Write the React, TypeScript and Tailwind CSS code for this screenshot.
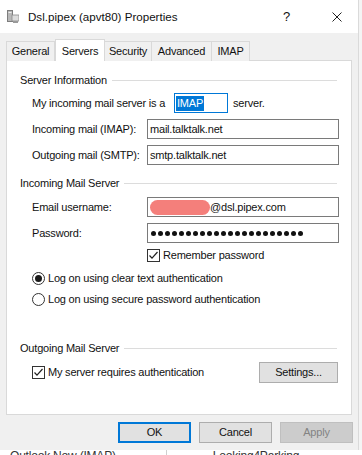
import React from "react";

const tabs = [
  { name: "General", w: "w-[49px]" },
  { name: "Servers", w: "w-[50px]", active: true },
  { name: "Security", w: "w-[48px]" },
  { name: "Advanced", w: "w-[61px]" },
  { name: "IMAP", w: "w-[39px]" },
];

function GroupHeader({ title }: { title: string }) {
  return (
    <div className="flex h-[14px] items-center">
      <span>{title}</span>
      <div className="ml-[5px] mr-[2px] h-px flex-1 bg-[#dcdcdc]" />
    </div>
  );
}

function Field({ label, children }: { label: string; children: React.ReactNode }) {
  return (
    <div className="flex h-[20px] items-center pl-[12px]">
      <span className="w-[115px] shrink-0">{label}</span>
      <div className="flex h-full flex-1 items-center border border-[#7a7a7a] bg-white px-[2px]">{children}</div>
    </div>
  );
}

function Check() {
  return (
    <span className="flex h-[13px] w-[13px] shrink-0 items-center justify-center border border-[#333] bg-white">
      <svg width="11" height="11" viewBox="0 0 11 11">
        <polyline points="1.5,5.5 4,8.2 9.5,2" fill="none" stroke="#222" strokeWidth="1.2" />
      </svg>
    </span>
  );
}

function Radio({ on }: { on?: boolean }) {
  return (
    <span className="flex h-[13px] w-[13px] shrink-0 items-center justify-center rounded-full border border-[#333] bg-white">
      {on && <span className="h-[7px] w-[7px] rounded-full bg-[#1a1a1a]" />}
    </span>
  );
}

export default function App() {
  return (
    <div className="flex h-[455px] w-[362px] flex-col overflow-hidden bg-white font-['Liberation_Sans',Arial,sans-serif] text-[11px] tracking-[-0.2px] text-[#111]">
      <div className="flex h-[450px] shrink-0">
        <div className="flex w-[358px] flex-col bg-[#f0f0f0]">
          {/* title bar */}
          <div className="flex h-[33px] shrink-0 items-center bg-white pl-[7px]">
            <svg width="12" height="13" viewBox="0 0 12 13">
              <rect x="0.5" y="0.5" width="5" height="11" fill="#b8b8b8" stroke="#7d7d7d" />
              <rect x="1.5" y="2" width="3" height="1" fill="#eee" />
              <rect x="5" y="5" width="7" height="6" fill="#dcdcdc" stroke="#8a8a8a" strokeWidth="0.8" />
              <rect x="6" y="11" width="5" height="2" fill="#9a9a9a" />
            </svg>
            <span className="ml-[9px] text-[11.6px] tracking-normal">Dsl.pipex (apvt80) Properties</span>
            <span className="ml-auto mr-[42px] text-[13px]">?</span>
            <svg className="mr-[16px]" width="10" height="10" viewBox="0 0 10 10">
              <path d="M0.5 0.5 L9.5 9.5 M9.5 0.5 L0.5 9.5" stroke="#222" strokeWidth="1" />
            </svg>
          </div>

          {/* tabs */}
          <div className="relative z-10 mt-[6px] -mb-px flex h-[22px] items-end pl-[6px]">
            {tabs.map((t) =>
              t.active ? (
                <div
                  key={t.name}
                  className={`${t.w} flex h-[22px] items-start justify-center border border-b-0 border-[#d9d9d9] bg-white pt-[3px]`}
                >
                  {t.name}
                </div>
              ) : (
                <div
                  key={t.name}
                  className={`${t.w} -ml-px flex h-[20px] items-center justify-center border border-b-0 border-[#d9d9d9] bg-[#f0f0f0] first:ml-0`}
                >
                  {t.name}
                </div>
              )
            )}
          </div>

          {/* panel */}
          <div className="ml-[6px] flex h-[355px] w-[346px] flex-col border border-[#d9d9d9] bg-white pl-[13px] pr-[12px]">
            <div className="mt-[12px]">
              <GroupHeader title="Server Information" />
            </div>
            <div className="mt-[6px] flex h-[20px] items-center pl-[12px]">
              <span className="w-[142px] shrink-0">My incoming mail server is a</span>
              <div className="flex h-[20px] w-[54px] items-center border border-[#0078d7] px-px">
                <span className="bg-[#0078d7] px-px leading-[15px] text-white">IMAP</span>
              </div>
              <span className="ml-[5px]">server.</span>
            </div>
            <div className="mt-[6px]">
              <Field label="Incoming mail (IMAP):">mail.talktalk.net</Field>
            </div>
            <div className="mt-[6px]">
              <Field label="Outgoing mail (SMTP):">smtp.talktalk.net</Field>
            </div>

            <div className="mt-[11px]">
              <GroupHeader title="Incoming Mail Server" />
            </div>
            <div className="mt-[7px]">
              <Field label="Email username:">
                <span className="h-[15px] w-[60px] rounded-full bg-[#f47f7b] blur-[0.6px]" />
                <span>@dsl.pipex.com</span>
              </Field>
            </div>
            <div className="mt-[6px]">
              <Field label="Password:">
                <div className="flex gap-[2px] pl-px">
                  {Array.from({ length: 22 }).map((_, i) => (
                    <span key={i} className="h-[5px] w-[5px] rounded-full bg-[#111]" />
                  ))}
                </div>
              </Field>
            </div>
            <div className="mt-[5px] flex h-[14px] items-center pl-[127px]">
              <Check />
              <span className="ml-[3px]">Remember password</span>
            </div>
            <div className="mt-[9px] flex h-[14px] items-center pl-[12px]">
              <Radio on />
              <span className="ml-[3px]">Log on using clear text authentication</span>
            </div>
            <div className="mt-[7px] flex h-[14px] items-center pl-[12px]">
              <Radio />
              <span className="ml-[3px]">Log on using secure password authentication</span>
            </div>

            <div className="mt-[35px]">
              <GroupHeader title="Outgoing Mail Server" />
            </div>
            <div className="mt-[7px] flex h-[21px] items-center pl-[12px]">
              <Check />
              <span className="ml-[3px]">My server requires authentication</span>
              <button className="ml-auto mr-px h-[21px] w-[79px] border border-[#adadad] bg-[#e1e1e1]">Settings...</button>
            </div>
          </div>

          {/* dialog buttons */}
          <div className="mt-[7px] flex justify-end gap-[8px] pr-[5px]">
            <button className="h-[21px] w-[73px] border-2 border-[#0078d7] bg-[#e1e1e1]">OK</button>
            <button className="h-[21px] w-[73px] border border-[#adadad] bg-[#e1e1e1]">Cancel</button>
            <button className="h-[21px] w-[73px] border border-[#bfbfbf] bg-[#cccccc] text-[#838383]">Apply</button>
          </div>
        </div>
        <div className="flex-1 border-l border-[#dadada] bg-[#f4f4f4]" />
      </div>

      {/* window behind */}
      <div className="flex h-[5px] overflow-hidden text-[12px] leading-[14px] text-[#333]">
        <span className="ml-[10px] -mt-[1px]">Outlook Now (IMAP)</span>
        <span className="ml-[50px] -mt-[4px] h-[10px] w-px bg-[#d0d0d0]" />
        <span className="ml-[46px] -mt-[1px]">Looking4Parking</span>
      </div>
    </div>
  );
}
